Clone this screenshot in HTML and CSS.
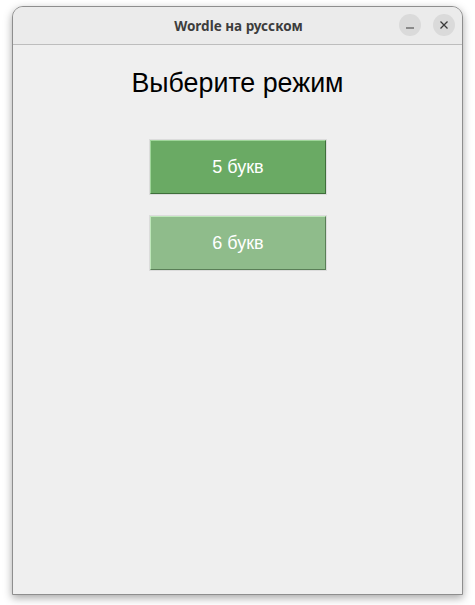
FILE: index.html
```html
<!DOCTYPE html>
<html lang="ru">
<head>
<meta charset="utf-8">
<title>Wordle на русском</title>
<link rel="stylesheet" href="styles.css">
</head>
<body>
<div class="window">
  <div class="titlebar">
    <span class="title">Wordle на русском</span>
    <div class="controls">
      <span class="ctl"><svg width="10" height="10" viewBox="0 0 10 10"><path d="M1 8h8" stroke="#3a3a3a" stroke-width="1.2"/></svg></span>
      <span class="ctl"><svg width="10" height="10" viewBox="0 0 10 10"><path d="M1.5 1.5l7 7M8.5 1.5l-7 7" stroke="#3a3a3a" stroke-width="1.3"/></svg></span>
    </div>
  </div>
  <div class="content">
    <h1 class="heading">Выберите режим</h1>
    <div class="modes">
      <div class="btn-frame"><button class="btn btn-5">5 букв</button></div>
      <div class="btn-frame"><button class="btn btn-6">6 букв</button></div>
    </div>
  </div>
</div>
</body>
</html>
```
FILE: styles.css
```css
html, body {
  margin: 0;
  padding: 0;
  background: #ffffff;
}
body {
  padding: 6px 12px 0 12px;
  height: 605px;
  box-sizing: border-box;
}
.window {
  width: 451px;
  height: 589px;
  box-sizing: border-box;
  border: 1px solid #8e8e8e;
  border-radius: 11px 11px 0 0;
  background: #efefef;
  box-shadow: 0 3px 8px rgba(0,0,0,0.35);
  display: flex;
  flex-direction: column;
  overflow: hidden;
}
.titlebar {
  height: 37px;
  flex: 0 0 37px;
  background: #ebebeb;
  border-bottom: 1px solid #bdbdbd;
  display: flex;
  align-items: center;
  justify-content: center;
  position: relative;
}
.title {
  font-family: "Noto Sans", "Open Sans", sans-serif;
  font-weight: 700;
  font-size: 13.5px;
  color: #3d3d3d;
  margin-left: 2px;
}
.controls {
  position: absolute;
  right: 7px;
  top: 7px;
  display: flex;
  gap: 12px;
}
.ctl {
  width: 22px;
  height: 22px;
  border-radius: 50%;
  background: #dadada;
  display: flex;
  align-items: center;
  justify-content: center;
}
.content {
  flex: 1;
  display: flex;
  flex-direction: column;
  align-items: center;
  background: #efefef;
}
.heading {
  margin: 22px 0 0 0;
  font-family: "Liberation Sans", Arial, sans-serif;
  font-weight: 400;
  font-size: 26.8px;
  line-height: 32px;
  color: #000;
}
.modes {
  margin-top: 40px;
  display: flex;
  flex-direction: column;
  gap: 20px;
  margin-left: 1px;
}
.btn-frame {
  border: 1px solid #dcdcdc;
  display: flex;
}
.btn {
  width: 176px;
  height: 54px;
  box-sizing: border-box;
  margin: 0;
  padding: 0;
  font-family: "Liberation Sans", Arial, sans-serif;
  font-size: 18px;
  color: #ffffff;
  border-style: solid;
  border-width: 1px;
  cursor: pointer;
}
.btn-5 {
  background: #6aaa64;
  border-color: #9fd69a #3f6f3b #3f6f3b #9fd69a;
}
.btn-6 {
  background: #8fbc8b;
  border-color: #bfe8bb #5a7f57 #5a7f57 #bfe8bb;
}
```
